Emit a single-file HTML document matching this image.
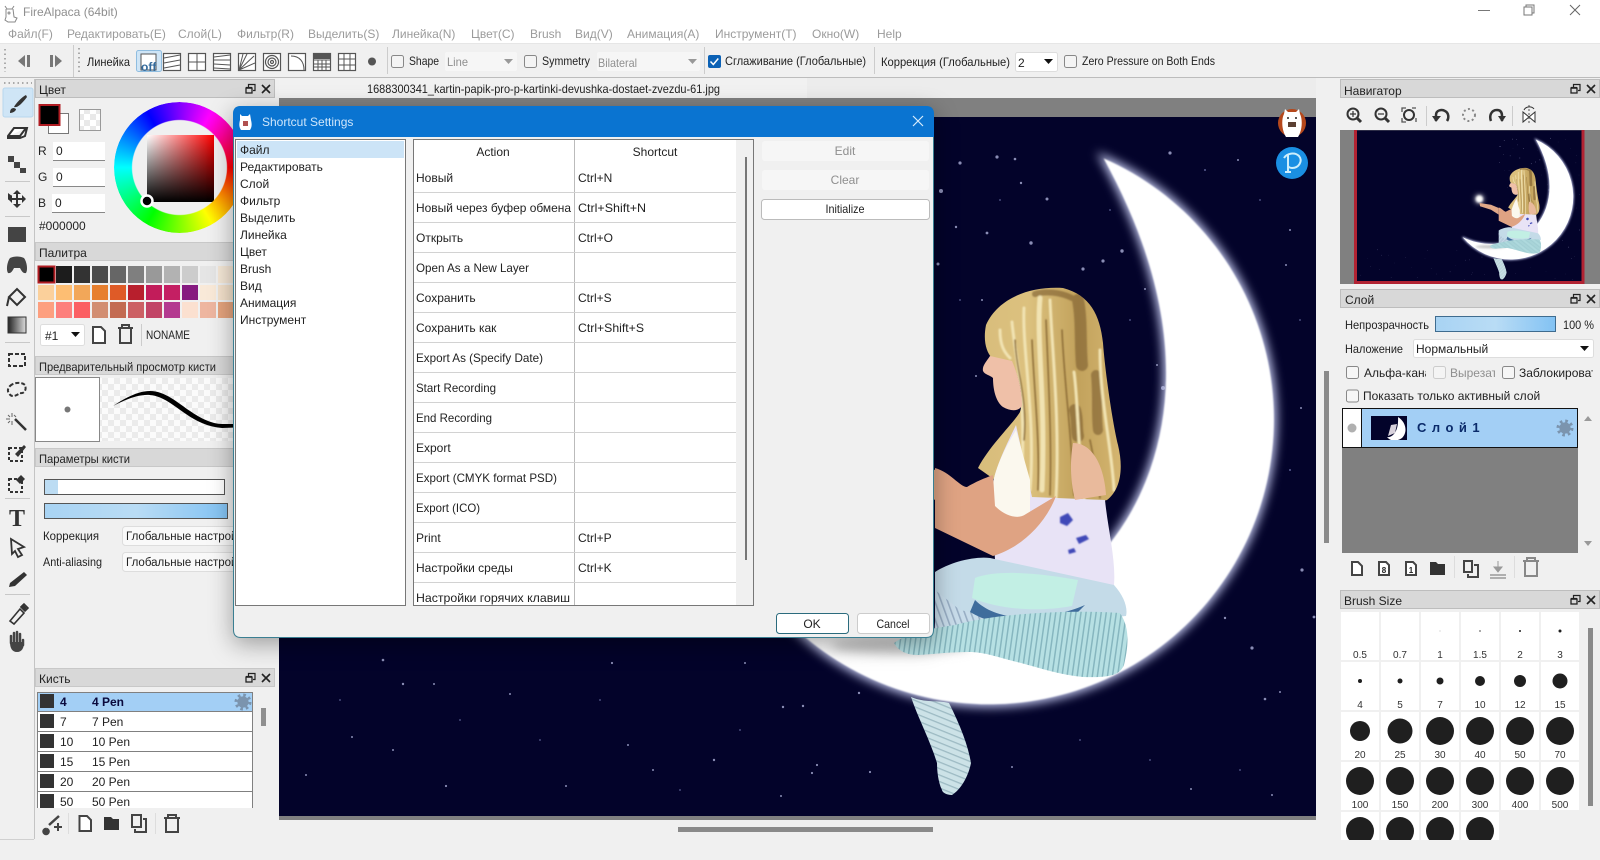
<!DOCTYPE html>
<html><head><meta charset="utf-8"><title>FireAlpaca</title>
<style>
html,body{margin:0;padding:0;width:1600px;height:860px;overflow:hidden;background:#f0f0f0}
svg{position:absolute;left:0;top:0}
text{font-family:"Liberation Sans","Noto Sans CJK SC",sans-serif;font-size:12px;fill:#222}
.m{fill:#9b9b9b}
.g{fill:#8f8f8f}
.c{text-anchor:middle}
.s{font-size:10px;fill:#333;text-anchor:middle}
#wheel{position:absolute;left:114px;top:102px;width:131px;height:131px;border-radius:50%;
background:conic-gradient(from 90deg,#f00,#ff0,#0f0,#0ff,#00f,#f0f,#f00);
-webkit-mask:radial-gradient(circle,transparent 47px,#000 48px);mask:radial-gradient(circle,transparent 47px,#000 48px)}
</style></head><body>
<svg width="1600" height="860" viewBox="0 0 1600 860">
<defs>
<filter id="b1" x="-20%" y="-20%" width="140%" height="140%"><feGaussianBlur stdDeviation="5"/></filter>
<filter id="b2" x="-5%" y="-5%" width="110%" height="110%"><feGaussianBlur stdDeviation=".7"/></filter>
<filter id="b3" x="-100%" y="-100%" width="300%" height="300%"><feGaussianBlur stdDeviation="5"/></filter>
<filter id="b4" x="-10%" y="-10%" width="120%" height="120%"><feGaussianBlur stdDeviation="1.500"/></filter>
<filter id="b5" x="-100%" y="-100%" width="300%" height="300%"><feGaussianBlur stdDeviation="12"/></filter>
<pattern id="ck" width="12" height="12" patternUnits="userSpaceOnUse"><rect width="12" height="12" fill="#fff"/><rect width="6" height="6" fill="#e9e9e9"/><rect x="6" y="6" width="6" height="6" fill="#e9e9e9"/></pattern>
<pattern id="st" width="5" height="8" patternUnits="userSpaceOnUse" patternTransform="rotate(8)"><rect width="5" height="8" fill="#b6e0e3"/><rect width="1.500" height="8" fill="#86b6bf"/></pattern>
<pattern id="st2" width="8" height="6" patternUnits="userSpaceOnUse" patternTransform="rotate(22)"><rect width="8" height="6" fill="#cce2e7"/><rect width="8" height="1.300" fill="#9dbac3"/></pattern>
<pattern id="st3" width="6" height="7" patternUnits="userSpaceOnUse" patternTransform="rotate(-20)"><rect width="6" height="7" fill="#c8dcea"/><rect width="1.600" height="7" fill="#98aec4"/></pattern>
<linearGradient id="hair" x1="0" y1="0" x2="1" y2="0"><stop offset="0" stop-color="#d8bd7c"/><stop offset=".35" stop-color="#dcc17e"/><stop offset=".7" stop-color="#c2a25c"/><stop offset="1" stop-color="#d4b570"/></linearGradient>
<linearGradient id="sl" x1="0" y1="0" x2="1" y2="0"><stop offset="0" stop-color="#a8d3f3"/><stop offset=".5" stop-color="#b9dcf5"/><stop offset="1" stop-color="#82c2f3"/></linearGradient>
<linearGradient id="sqh" x1="0" y1="0" x2="1" y2="0"><stop offset="0" stop-color="#fff"/><stop offset="1" stop-color="#f00"/></linearGradient>
<linearGradient id="sqv" x1="0" y1="0" x2="0" y2="1"><stop offset="0" stop-color="#000" stop-opacity="0"/><stop offset="1" stop-color="#000"/></linearGradient>
<linearGradient id="gr" x1="0" y1="0" x2="1" y2="0"><stop offset="0" stop-color="#222"/><stop offset="1" stop-color="#ddd"/></linearGradient>
<clipPath id="chair"><path d="M1063,288C1030,286 998,298 986,325C983,340 986,352 992,358L1012,362C1020,380 1024,400 1020,412C1012,425 990,445 978,468C995,480 1015,495 1032,497C1050,510 1090,505 1107,500C1120,490 1124,470 1118,445C1112,420 1105,370 1103,343C1100,315 1090,295 1063,288Z"/></clipPath>
<clipPath id="cnav"><rect x="1354" y="130" width="231" height="154"/></clipPath>
<clipPath id="cth"><rect x="1371" y="416" width="36" height="24"/></clipPath>
<clipPath id="cbl"><rect x="30" y="690" width="230" height="118"/></clipPath>
<clipPath id="cbs"><rect x="1340" y="610" width="260" height="230"/></clipPath>
<clipPath id="ca"><rect x="1360" y="360" width="66" height="24"/></clipPath>
<clipPath id="cb"><rect x="1448" y="360" width="47" height="24"/></clipPath>
<clipPath id="cc"><rect x="1517" y="360" width="76" height="24"/></clipPath>
<g id="hb"><rect x="-4" y="-1" width="6" height="5" fill="none" stroke="#222" stroke-width="1.300"/><path d="M-4,-1.200H2" stroke="#222" stroke-width="1.800"/><path d="M-1.500,-2V-4.500H5V1.500H3" fill="none" stroke="#222" stroke-width="1.200"/><path d="M12,-4L20,4M20,-4L12,4" stroke="#222" stroke-width="1.600"/></g>
<g id="gear"><circle r="7" fill="none" stroke="#7b94ae" stroke-width="3" stroke-dasharray="2.600 2.900"/><circle r="5.600" fill="#7b94ae"/></g>
<g id="scene">
<rect x="279" y="117" width="1037" height="699" fill="#03032a"/>
<g fill="#c4c8f0" opacity=".7">
<circle cx="960" cy="163" r="1.600"/><circle cx="997" cy="157" r="1.600"/><circle cx="1015" cy="159" r="1.300"/><circle cx="1021" cy="183" r="1.200"/><circle cx="941" cy="191" r="2"/><circle cx="1047" cy="199" r="1.500"/><circle cx="956" cy="227" r="1.200"/><circle cx="987" cy="233" r="1.400"/><circle cx="1031" cy="243" r="1.700"/><circle cx="1122" cy="251" r="1.700"/><circle cx="1103" cy="261" r="1.600"/><circle cx="1083" cy="269" r="1.600"/><circle cx="938" cy="264" r="1.500"/><circle cx="1170" cy="153" r="1.600"/><circle cx="1163" cy="388" r="2"/><circle cx="1145" cy="289" r="1"/><circle cx="976" cy="376" r="1"/><circle cx="982" cy="300" r="1"/><circle cx="1157" cy="365" r="1"/><circle cx="1302" cy="570" r="1.600"/><circle cx="1252" cy="648" r="1.600"/><circle cx="1225" cy="618" r="1.200"/><circle cx="1265" cy="699" r="1.300"/><circle cx="1280" cy="692" r="1"/><circle cx="1314" cy="617" r="1.400"/><circle cx="859" cy="693" r="1.200"/><circle cx="783" cy="707" r="1.200"/><circle cx="803" cy="706" r="1.200"/><circle cx="817" cy="765" r="1.100"/><circle cx="812" cy="773" r="1.100"/><circle cx="870" cy="772" r="1.100"/><circle cx="1012" cy="767" r="1"/><circle cx="1191" cy="789" r="1"/><circle cx="1272" cy="795" r="1"/><circle cx="383" cy="660" r="1.300"/><circle cx="403" cy="684" r="1.200"/><circle cx="434" cy="684" r="1"/><circle cx="714" cy="760" r="1.200"/><circle cx="653" cy="770" r="1"/><circle cx="628" cy="745" r="1"/><circle cx="446" cy="786" r="1.100"/><circle cx="393" cy="750" r="1"/><circle cx="510" cy="694" r="1"/><circle cx="352" cy="737" r="1"/><circle cx="612" cy="663" r="1.100"/><circle cx="745" cy="663" r="1"/><circle cx="566" cy="786" r="1"/><circle cx="781" cy="796" r="1"/><circle cx="306" cy="775" r="1"/><circle cx="1286" cy="265" r="1"/><circle cx="1301" cy="408" r="1"/><circle cx="1238" cy="160" r="1"/><circle cx="1290" cy="230" r="1"/>
</g>
<g fill="#5a5e90"><circle cx="1205" cy="170" r="1"/><circle cx="1260" cy="200" r=".9"/><circle cx="1300" cy="320" r=".9"/><circle cx="1290" cy="470" r="1"/><circle cx="1020" cy="300" r=".9"/><circle cx="1000" cy="200" r=".9"/><circle cx="1130" cy="320" r=".9"/><circle cx="1110" cy="210" r=".9"/><circle cx="960" cy="300" r=".9"/><circle cx="340" cy="700" r=".9"/><circle cx="460" cy="720" r=".9"/><circle cx="540" cy="740" r=".9"/><circle cx="600" cy="700" r=".9"/><circle cx="680" cy="790" r=".9"/><circle cx="740" cy="730" r=".9"/><circle cx="1080" cy="740" r=".9"/><circle cx="1150" cy="760" r=".9"/><circle cx="1240" cy="770" r=".9"/></g>
<path d="M1103.600,158.400A285,285 0 1 1 771,603C900,665 1090,640 1150,470C1185,370 1160,260 1103.600,158.400Z" fill="#bfc4ea" stroke="#bfc4ea" stroke-width="6" filter="url(#b1)"/>
<path d="M1103.600,158.400A285,285 0 1 1 771,603C900,665 1090,640 1150,470C1185,370 1160,260 1103.600,158.400Z" fill="#fff" filter="url(#b2)"/>
<ellipse cx="900" cy="646" rx="70" ry="8" fill="#c8c8c8" filter="url(#b3)"/>
<circle cx="847" cy="429" r="18" fill="#fff" filter="url(#b5)"/><circle cx="847" cy="429" r="16" fill="#fff" filter="url(#b3)"/>
<path d="M935,470L900,455L848,447L850,462L900,478L935,500Z" fill="#e0a888"/>
<path d="M1063,288C1030,286 998,298 986,325C983,340 986,352 992,358L1012,362C1020,380 1024,400 1020,412C1012,425 990,445 978,468C995,480 1015,495 1032,497C1050,510 1090,505 1107,500C1120,490 1124,470 1118,445C1112,420 1105,370 1103,343C1100,315 1090,295 1063,288Z" fill="url(#hair)"/>
<g clip-path="url(#chair)"><g fill="none" stroke-linecap="round" filter="url(#b2)">
<g stroke="#7a5c2c" opacity=".6"><path d="M1078,300C1082,320 1080,345 1082,365" stroke-width="12"/><path d="M1096,375C1098,395 1096,415 1098,430" stroke-width="10"/><path d="M1075,410C1078,420 1076,428 1078,436" stroke-width="12"/><path d="M1035,294C1045,291 1060,292 1072,298" stroke-width="6"/></g>
<g stroke="#f1e3b2"><path d="M1040,298C1036,340 1046,400 1042,490" stroke-width="5"/><path d="M1050,300C1052,350 1060,420 1056,498" stroke-width="3"/><path d="M1024,308C1022,350 1036,420 1030,490" stroke-width="3"/><path d="M1012,322C1014,350 1026,390 1022,470" stroke-width="3"/><path d="M1100,350C1100,400 1112,450 1114,490" stroke-width="3"/><path d="M1074,372C1078,400 1078,450 1084,500" stroke-width="3"/><path d="M1000,330C1000,345 1004,352 1010,358" stroke-width="3"/></g>
<g stroke="#8a6a34" stroke-width="1.500"><path d="M1062,330C1064,380 1072,440 1074,495"/><path d="M1032,340C1034,390 1040,440 1038,490"/><path d="M1090,440C1094,460 1098,480 1100,498"/><path d="M1015,340C1016,370 1028,400 1024,440"/><path d="M1046,320C1048,370 1052,440 1050,495"/></g>
</g></g>
<path d="M990,356C986,362 982,366 983,371C985,375 990,375 993,378C993,390 996,402 1003,407C1010,411 1018,412 1022,406C1022,390 1018,375 1012,361Z" fill="#efc0a8"/>
<path d="M1016,425C1004,450 994,470 992,490C990,530 995,550 995,560L1000,580L1114,585C1116,560 1108,530 1105,500L1032,497Z" fill="#e8e3f6"/>
<path d="M1016,430C1004,450 994,470 992,490L996,530L1030,515L1030,480Z" fill="#fbf8ee"/>
<path d="M1073,443C1092,443 1104,465 1106,495L1075,500C1070,480 1070,460 1073,443Z" fill="#e9ba9c"/>
<g fill="#4049b8" filter="url(#b2)"><path d="M1060,517l8,-4l5,7l-6,6l-7,-3zM1076,538l10,-3l3,4l-10,5zM1068,550l6,-2l2,4l-7,2z"/></g>
<path d="M935,468C950,472 960,487 967,487C975,482 985,478 993,475L995,506C1005,516 1018,520 1026,514L1056,496C1045,525 1020,548 993,556L935,528Z" fill="#dfa383"/>
<path d="M935,585L987,583L1010,625L935,632Z" fill="url(#st3)"/>
<path d="M935,572C950,562 975,556 990,558L1114,585C1124,596 1128,608 1126,616L1030,625L960,610L935,590Z" fill="#c4dbe8"/>
<path d="M975,578C1000,568 1050,575 1078,580L1072,606C1040,612 1000,610 972,598Z" fill="#c2efe4"/>
<path d="M975,600C1000,625 1050,620 1085,605L1078,612C1040,628 1000,630 970,612Z" fill="#3f6c9c"/>
<path d="M894,643C905,635 920,630 955,625C1000,612 1080,610 1120,613C1128,625 1130,640 1124,665C1120,675 1110,678 1083,677C1060,675 1040,668 1021,663C1000,658 985,652 969,652C950,652 935,654 918,655C905,655 898,650 894,643Z" fill="url(#st)"/>
<path d="M911,697C925,703 938,700 949,703C960,725 968,745 971,763C968,778 960,790 952,795C946,795 942,792 942,790C938,782 937,770 937,763C930,740 918,718 911,697Z" fill="url(#st2)"/>
</g>
</defs>

<rect width="1600" height="860" fill="#f0f0f0"/>
<rect width="1600" height="43" fill="#fff"/>
<!-- title -->
<g fill="none" stroke="#888" stroke-width="1"><path d="M5,6l2,3h5l2,-3M6,9v8l-1,3l3,2h7l2,-4l-3,-1l-1,-8"/><circle cx="9" cy="13" r="1"/></g>
<text x="23" y="16" class="g">FireAlpaca (64bit)</text>
<path d="M1478,10.500H1490" stroke="#777"/><rect x="1524" y="7" width="8" height="8" fill="none" stroke="#777"/><path d="M1526,7V5H1534V13H1532" fill="none" stroke="#777"/><path d="M1570,5L1580,15M1580,5L1570,15" stroke="#666"/>
<text x="8" y="38" class="m">Файл(F)</text><text x="67" y="38" class="m">Редактировать(E)</text><text x="178" y="38" class="m">Слой(L)</text><text x="237" y="38" class="m">Фильтр(R)</text><text x="308" y="38" class="m">Выделить(S)</text><text x="392" y="38" class="m">Линейка(N)</text><text x="471" y="38" class="m">Цвет(C)</text><text x="530" y="38" class="m">Brush</text><text x="575" y="38" class="m">Вид(V)</text><text x="627" y="38" class="m">Анимация(A)</text><text x="715" y="38" class="m">Инструмент(T)</text><text x="812" y="38" class="m">Окно(W)</text><text x="877" y="38" class="m">Help</text>

<!-- toolbar -->
<rect y="43" width="1600" height="34" fill="#f0f0f0"/><path d="M0,77.500H1600" stroke="#bcbcbc"/><path d="M0,43.500H1600" stroke="#e6e6e6"/>
<path d="M5,49V72M79,48V73" stroke="#aaa" stroke-width="2" stroke-dasharray="1.500 3"/>
<path d="M18,61l7,-6v12zM27,55h3v12h-3zM50,55h3v12h-3zM55,55l7,6l-7,6z" fill="#777"/>
<path d="M73.500,45V77M387.500,47V74M704.500,47V74M874.500,47V74" stroke="#ccc"/>
<text x="87" y="66" textLength="43" lengthAdjust="spacingAndGlyphs">Линейка</text>
<rect x="136.500" y="50.500" width="25" height="21" rx="2" fill="#cfe5f6" stroke="#8fbde0"/>
<rect x="141" y="54" width="15" height="16" fill="#fff" stroke="#555"/>
<text x="141" y="71" style="font-size:12px;font-weight:bold;fill:#336a9c">off</text>
<g fill="#fff" stroke="#555" stroke-width="1.200">
<rect x="163.500" y="53.500" width="17" height="17"/><rect x="188.500" y="53.500" width="17" height="17"/><rect x="213.500" y="53.500" width="17" height="17"/><rect x="238.500" y="53.500" width="17" height="17"/><rect x="263.500" y="53.500" width="17" height="17"/><circle cx="272" cy="62" r="6.500"/><circle cx="272" cy="62" r="4"/><circle cx="272" cy="62" r="1.500"/><rect x="288.500" y="53.500" width="17" height="17"/><rect x="313.500" y="53.500" width="17" height="17"/><rect x="338.500" y="53.500" width="17" height="17"/>
</g>
<g fill="none" stroke="#555">
<path d="M164,58L180,55M164,63L180,60M164,68L180,65M197,54V70M189,62H205M214,57L230,55M214,60L230,60M214,64L230,65M214,68L230,69M239,70L247,54M239,70L254,56M239,70L255,63M239,70L243,54M291,56C300,56 304,62 304,70M314,60H330M314,64H330M314,67H330M318,60V70M322,60V70M326,60V70M344,54V70M350,54V70M339,59H355M339,65H355"/>
</g>
<rect x="314" y="54" width="16" height="5" fill="#555"/>
<circle cx="372" cy="61.500" r="4" fill="#555"/>
<rect x="391.500" y="55.500" width="12" height="12" rx="2" fill="#f4f4f4" stroke="#888"/>
<text x="409" y="65" textLength="30" lengthAdjust="spacingAndGlyphs">Shape</text>
<rect x="445" y="52" width="72" height="19" rx="2" fill="#f6f6f6"/><text x="447" y="66" class="g" textLength="21" lengthAdjust="spacingAndGlyphs">Line</text><path d="M504,59h9l-4.500,5z" fill="#999"/>
<rect x="524.500" y="55.500" width="12" height="12" rx="2" fill="#f4f4f4" stroke="#888"/>
<text x="542" y="65" textLength="48" lengthAdjust="spacingAndGlyphs">Symmetry</text>
<rect x="597" y="52" width="103" height="19" rx="2" fill="#f6f6f6"/><text x="598" y="67" class="g" textLength="39" lengthAdjust="spacingAndGlyphs">Bilateral</text><path d="M688,59h9l-4.500,5z" fill="#999"/>
<rect x="708" y="55" width="13" height="13" rx="2" fill="#0b61b5"/><path d="M710.500,61.500l2.800,3l5,-6" fill="none" stroke="#fff" stroke-width="1.500"/>
<text x="725" y="65" textLength="141" lengthAdjust="spacingAndGlyphs">Сглаживание (Глобальные)</text>
<text x="881" y="66" textLength="129" lengthAdjust="spacingAndGlyphs">Коррекция (Глобальные)</text>
<rect x="1015.500" y="52.500" width="42" height="19" rx="2" fill="#fff" stroke="#ddd"/><text x="1018" y="67">2</text><path d="M1044,59h9l-4.500,5z" fill="#111"/>
<rect x="1064.500" y="55.500" width="12" height="12" rx="2" fill="#f4f4f4" stroke="#888"/>
<text x="1082" y="65" textLength="133" lengthAdjust="spacingAndGlyphs">Zero Pressure on Both Ends</text>

<!-- left toolbar -->
<path d="M34.500,79V839" stroke="#c4c4c4"/><path d="M0,839.500H34" stroke="#d0d0d0"/>
<path d="M4,83H32" stroke="#aaa" stroke-width="2" stroke-dasharray="1.500 3"/>
<rect x="3" y="88" width="30" height="29" rx="2" fill="#cfe5f6" stroke="#b7d6ee"/>
<path d="M26,95C22,97 16,103 14,107C17,108 21,105 27,97zM14,108C11,108 10,110 10,113C13,113 16,111 16,109z" fill="#333"/>
<path d="M8,136L14,128H27L25,136L20,138H8zM9,136H20L26,128" fill="#fff" stroke="#333" stroke-width="2"/>
<path d="M8,156h6v6h-6zM14,162h6v6h-6zM20,168h6v5h-6z" fill="#444"/>
<path d="M5,181.500H30M5,216.500H30M5,342.500H30M5,498.500H30M5,594.500H30" stroke="#c8c8c8"/>
<path d="M17,190l4,4h-3v4h4v-3l4,4l-4,4v-3h-4v4h3l-4,4l-4,-4h3v-4h-4v3l-4,-4l4,-4v3h4v-4h-3z" fill="#333"/><path d="M8,193l4,3l-4,4z" fill="#333"/>
<rect x="8" y="227" width="18" height="15" fill="#444"/>
<path d="M10,258C14,256 20,256 24,258C27,262 28,270 26,273C23,274 21,270 20,268H14C13,270 11,274 8,273C6,270 7,262 10,258Z" fill="#444"/>
<path d="M9,297L17,289L25,297L17,305ZM9,297L7,306" fill="none" stroke="#333" stroke-width="2"/>
<rect x="8" y="317" width="18" height="16" fill="url(#gr)" stroke="#333"/>
<rect x="9" y="354" width="16" height="12" fill="none" stroke="#333" stroke-width="2" stroke-dasharray="4 2"/>
<path d="M10,386C14,382 22,382 25,385C27,390 24,394 20,393C16,396 11,398 9,393C7,391 8,388 10,386Z" fill="none" stroke="#333" stroke-width="2" stroke-dasharray="4 2"/>
<path d="M15,419L26,430" stroke="#333" stroke-width="2.500"/><path d="M12,413v4M12,421v4M6,419h4M14,415l2,2M8,415l2,2M8,423l2,-2" stroke="#666"/>
<rect x="9" y="448" width="13" height="13" fill="none" stroke="#333" stroke-width="2" stroke-dasharray="3 2"/><path d="M15,454L24,445L26,447L18,457z" fill="#333"/>
<rect x="9" y="479" width="13" height="13" fill="none" stroke="#333" stroke-width="2" stroke-dasharray="3 2"/><path d="M16,480L21,475L25,479L20,484z" fill="#333"/>
<text x="17" y="526" class="c" style="font-family:'Liberation Serif',serif;font-size:24px;font-weight:bold;fill:#333">T</text>
<path d="M11,539L24,547L18,549L22,555L18,557L15,551L12,554Z" fill="none" stroke="#333" stroke-width="1.800"/>
<path d="M10,583L24,572L27,575L15,586L9,587Z" fill="#333"/>
<path d="M10,621L20,609L24,613L14,624ZM21,607L24,604L28,608L25,611Z" fill="none" stroke="#333" stroke-width="1.600"/><path d="M20,607l4,4l3,-3l-4,-4z" fill="#333"/>
<path d="M11,643V636M14,642V633M17,642V632M20,642V634M23,645V640" stroke="#444" stroke-width="2.500" stroke-linecap="round"/><path d="M10,642H24C24,648 22,652 17,652C12,652 10,648 10,642Z" fill="#444"/>

<!-- Color panel -->
<rect x="35.500" y="79.500" width="239" height="18" fill="#d8d8d8" stroke="#bdbdbd"/><text x="39" y="94">Цвет</text><use href="#hb" x="250" y="89"/>
<rect x="48.500" y="113.500" width="20" height="20" fill="#fff" stroke="#777"/>
<rect x="39.500" y="105" width="20" height="20" fill="#000" stroke="#b01c22" stroke-width="2"/>
<rect x="79.500" y="109.500" width="21" height="21" fill="url(#ck)" stroke="#999"/>
<text x="38" y="155">R</text><text x="38" y="181">G</text><text x="38" y="207">B</text>
<rect x="53" y="142" width="52" height="18" fill="#fff"/><path d="M53,160.500H105" stroke="#888"/><text x="56" y="155">0</text>
<rect x="53" y="168" width="52" height="18" fill="#fff"/><path d="M53,186.500H105" stroke="#888"/><text x="56" y="181">0</text>
<rect x="52" y="194" width="53" height="18" fill="#fff"/><path d="M52,212.500H105" stroke="#888"/><text x="55" y="207">0</text>
<text x="39" y="230">#000000</text>
<rect x="147" y="135" width="67" height="67" fill="url(#sqh)"/><rect x="147" y="135" width="67" height="67" fill="url(#sqv)"/>

<!-- palette -->
<rect x="35.500" y="242.500" width="239" height="18" fill="#d8d8d8" stroke="#c8c8c8"/><text x="39" y="257">Палитра</text>
<rect x="38.500" y="266.500" width="16" height="16" fill="#000" stroke="#b01c22" stroke-width="2"/>
<g>
<rect x="56" y="266" width="16" height="17" fill="#1c1c1c"/><rect x="74" y="266" width="16" height="17" fill="#333"/><rect x="92" y="266" width="16" height="17" fill="#4b4b4b"/><rect x="110" y="266" width="16" height="17" fill="#666"/><rect x="128" y="266" width="16" height="17" fill="#7f7f7f"/><rect x="146" y="266" width="16" height="17" fill="#999"/><rect x="164" y="266" width="16" height="17" fill="#b2b2b2"/><rect x="182" y="266" width="16" height="17" fill="#ccc"/><rect x="200" y="266" width="16" height="17" fill="#e5e5e5"/><rect x="218" y="266" width="16" height="17" fill="#f5e7d6"/>
<rect x="38" y="285" width="16" height="15" fill="#fbd09b"/><rect x="56" y="285" width="16" height="15" fill="#fdbe73"/><rect x="74" y="285" width="16" height="15" fill="#f2a759"/><rect x="92" y="285" width="16" height="15" fill="#e77f2f"/><rect x="110" y="285" width="16" height="15" fill="#df5b27"/><rect x="128" y="285" width="16" height="15" fill="#b81f2d"/><rect x="146" y="285" width="16" height="15" fill="#c21c5a"/><rect x="164" y="285" width="16" height="15" fill="#c41f63"/><rect x="182" y="285" width="16" height="15" fill="#861a80"/><rect x="200" y="285" width="16" height="15" fill="#f9e9d8"/><rect x="218" y="285" width="16" height="15" fill="#f4e2cc"/>
<rect x="38" y="302" width="16" height="16" fill="#fd9f7f"/><rect x="56" y="302" width="16" height="16" fill="#fd7f7c"/><rect x="74" y="302" width="16" height="16" fill="#fb5f63"/><rect x="92" y="302" width="16" height="16" fill="#d28e72"/><rect x="110" y="302" width="16" height="16" fill="#c36b52"/><rect x="128" y="302" width="16" height="16" fill="#cc6064"/><rect x="146" y="302" width="16" height="16" fill="#c24466"/><rect x="164" y="302" width="16" height="16" fill="#b43a90"/><rect x="182" y="302" width="16" height="16" fill="#fbe0d0"/><rect x="200" y="302" width="16" height="16" fill="#eeb6a0"/><rect x="218" y="302" width="16" height="16" fill="#e6a47e"/>
</g>
<rect x="40.500" y="324.500" width="44" height="21" rx="2" fill="#fff" stroke="#ddd"/><text x="45" y="340">#1</text><path d="M71,332h9l-4.500,5z" fill="#111"/>
<path d="M93,327H101L105,331V343H93Z" fill="#fff" stroke="#444" stroke-width="2"/>
<path d="M118,328H133M122,328V325H129V328M120,328V343H131V328" fill="none" stroke="#444" stroke-width="2"/>
<path d="M141.500,324V346" stroke="#ccc"/>
<text x="146" y="339" textLength="44" lengthAdjust="spacingAndGlyphs">NONAME</text>

<!-- preview -->
<rect x="35.500" y="356.500" width="239" height="18" fill="#d8d8d8" stroke="#c8c8c8"/><text x="39" y="371" textLength="177" lengthAdjust="spacingAndGlyphs">Предварительный просмотр кисти</text>
<rect x="100" y="378" width="140" height="63" fill="url(#ck)" opacity=".7"/>
<rect x="35.500" y="377.500" width="64" height="64" fill="#fff" stroke="#888"/><circle cx="67.500" cy="409.500" r="3" fill="#777"/>
<path d="M113,406C125,398 138,391 150,391C165,391 178,403 190,411C200,418 212,424 222,424L236,424L236,427.500L222,428C208,427 196,421 186,414C174,406 163,396 150,395C138,394 125,400 113,406Z" fill="#000"/>

<!-- params -->
<rect x="35.500" y="448.500" width="239" height="18" fill="#d8d8d8" stroke="#c8c8c8"/><text x="39" y="463" textLength="91" lengthAdjust="spacingAndGlyphs">Параметры кисти</text>
<rect x="44.500" y="479.500" width="180" height="15" fill="#fff" stroke="#555"/><rect x="45" y="480" width="13" height="14" fill="#bcdcf3"/>
<rect x="44.500" y="503.500" width="183" height="15" fill="url(#sl)" stroke="#555"/>
<text x="43" y="540" textLength="56" lengthAdjust="spacingAndGlyphs">Коррекция</text><text x="43" y="566" textLength="59" lengthAdjust="spacingAndGlyphs">Anti-aliasing</text>
<rect x="122.500" y="526.500" width="130" height="19" rx="3" fill="#f9f9f9" stroke="#ddd"/><text x="126" y="540" style="font-size:11.500px">Глобальные настройки</text>
<rect x="122.500" y="552.500" width="130" height="19" rx="3" fill="#f9f9f9" stroke="#ddd"/><text x="126" y="566" style="font-size:11.500px">Глобальные настройки</text>

<!-- brush panel -->
<rect x="35.500" y="668.500" width="239" height="18" fill="#d8d8d8" stroke="#c8c8c8"/><text x="39" y="683">Кисть</text><use href="#hb" x="250" y="678"/>
<g clip-path="url(#cbl)">
<rect x="37.500" y="692.500" width="215" height="131" fill="#fff" stroke="#808080"/>
<rect x="38" y="693" width="214" height="18" fill="#a3cff5"/>
<path d="M38,711.500H252M38,731.500H252M38,751.500H252M38,771.500H252M38,791.500H252" stroke="#808080"/>
<g fill="#333"><rect x="40" y="694" width="14" height="14"/><rect x="40" y="714" width="14" height="14"/><rect x="40" y="734" width="14" height="14"/><rect x="40" y="754" width="14" height="14"/><rect x="40" y="774" width="14" height="14"/><rect x="40" y="794" width="14" height="14"/></g>
<text x="60" y="706" style="font-weight:bold;fill:#0a0a3c">4</text><text x="92" y="706" style="font-weight:bold;fill:#0a0a3c">4  Pen</text>
<text x="60" y="726">7</text><text x="92" y="726">7  Pen</text>
<text x="60" y="746">10</text><text x="92" y="746">10  Pen</text>
<text x="60" y="766">15</text><text x="92" y="766">15  Pen</text>
<text x="60" y="786">20</text><text x="92" y="786">20  Pen</text>
<text x="60" y="806">50</text><text x="92" y="806">50  Pen</text>
</g>
<use href="#gear" x="243" y="702"/>
<rect x="261" y="708" width="5" height="18" fill="#8f8f8f"/>
<path d="M49,825L59,816M46,829a2.500,2.500 0 1 0 .1,0" fill="#444" stroke="#444" stroke-width="2.500"/><path d="M58,823V831M54,827H62" stroke="#444" stroke-width="2"/>
<path d="M68.500,813V834M155.500,813V834" stroke="#ddd"/>
<path d="M79.500,816H87L91,820V831H79.500Z" fill="#fff" stroke="#444" stroke-width="2"/>
<path d="M104,817H111L113,819H119V830H104Z" fill="#333"/>
<path d="M132,815H141V827H132ZM143,819H146V832H135V829" fill="none" stroke="#444" stroke-width="2"/>
<path d="M164,818H180M168,818V815H176V818M166,818V832H178V818" fill="none" stroke="#444" stroke-width="2"/>

<!-- tabs and canvas -->
<rect x="279" y="78" width="1037" height="20" fill="#ececec"/>
<rect x="279" y="78" width="528" height="20" fill="#f1f1f1"/>
<text x="367" y="93" textLength="353" lengthAdjust="spacingAndGlyphs">1688300341_kartin-papik-pro-p-kartinki-devushka-dostaet-zvezdu-61.jpg</text>
<rect x="279" y="98" width="1037" height="722" fill="#808080"/>
<use href="#scene"/>
<rect x="1324" y="371" width="5" height="172" fill="#8a8a8a"/>
<rect x="678" y="827" width="255" height="5" fill="#8a8a8a"/>
<!-- alpaca & pixiv -->
<circle cx="1292" cy="123" r="14" fill="#b5481c"/>
<path d="M1284,114L1285,109L1288,112H1296L1299,109L1300,114C1303,120 1302,131 1298,137H1286C1282,131 1281,120 1284,114Z" fill="#fff"/>
<rect x="1288" y="122" width="8" height="5" fill="#5c4033"/>
<circle cx="1288" cy="118" r="1" fill="#222"/><circle cx="1296" cy="118" r="1" fill="#222"/>
<circle cx="1292" cy="163" r="16" fill="#1a8fe3"/>
<path d="M1284,158C1287,153 1295,152 1299,156C1303,161 1299,168 1292,168C1289,168 1288,166 1288,166M1288,155V172M1285,172H1291" fill="none" stroke="#cdeefc" stroke-width="2"/>

<!-- navigator -->
<rect x="1340.500" y="79.500" width="259" height="18" fill="#d8d8d8" stroke="#bdbdbd"/><text x="1344" y="95">Навигатор</text><use href="#hb" x="1575" y="89"/>
<g fill="none" stroke="#333" stroke-width="2">
<circle cx="1353" cy="114" r="5.500"/><path d="M1357,118L1361,122" stroke-width="3"/><path d="M1350,114h6M1353,111v6" stroke-width="1.200"/>
<circle cx="1381" cy="114" r="5.500"/><path d="M1385,118L1389,122" stroke-width="3"/><path d="M1378,114h6" stroke-width="1.200"/>
<circle cx="1409" cy="115" r="5"/><path d="M1402,112V108H1406M1416,108H1412M1416,122V118M1402,118V122H1406" stroke-width="1.300" stroke="#555"/>
<path d="M1436,121V115C1436,110 1442,109 1445,111C1449,113 1449,118 1447,121" stroke-width="2.500"/>
<path d="M1491,121C1489,116 1491,110 1497,110C1501,110 1502,113 1502,116V121" stroke-width="2.500"/>
</g>
<path d="M1432,116H1441L1436,122ZM1498,116H1506L1502,122Z" fill="#333"/>
<circle cx="1469" cy="115" r="6" fill="none" stroke="#888" stroke-width="2" stroke-dasharray="2 2.500"/>
<path d="M1426.500,106V126M1512.500,106V126" stroke="#ccc"/>
<path d="M1523,112L1529,117L1523,122ZM1535,112L1529,117L1535,122Z" fill="#fff" stroke="#333"/><path d="M1529,105V125" stroke="#555" stroke-dasharray="2 2"/><path d="M1524,110C1526,106 1532,106 1534,109" fill="none" stroke="#333"/>
<rect x="1340" y="130" width="260" height="154" fill="#808080"/>
<g clip-path="url(#cnav)"><use href="#scene" transform="translate(1293,104.600) scale(.22)"/></g>
<path d="M1355.500,130V282.500H1583V130" fill="none" stroke="#b22333" stroke-width="3"/>

<!-- layer -->
<rect x="1340.500" y="289.500" width="259" height="18" fill="#d8d8d8" stroke="#bdbdbd"/><text x="1345" y="304">Слой</text><use href="#hb" x="1575" y="299"/>
<text x="1345" y="329" textLength="84" lengthAdjust="spacingAndGlyphs">Непрозрачность</text>
<rect x="1435.500" y="316.500" width="120" height="15" fill="url(#sl)" stroke="#3f6c8f"/>
<text x="1563" y="329" textLength="31" lengthAdjust="spacingAndGlyphs">100 %</text>
<text x="1345" y="353" textLength="58" lengthAdjust="spacingAndGlyphs">Наложение</text>
<rect x="1413.500" y="339.500" width="180" height="18" rx="2" fill="#fff" stroke="#ddd"/><text x="1416" y="353">Нормальный</text><path d="M1580,346h9l-4.500,5z" fill="#111"/>
<rect x="1346.500" y="366.500" width="12" height="12" rx="2" fill="#f6f6f6" stroke="#888"/><text x="1364" y="377" clip-path="url(#ca)">Альфа-канал</text>
<rect x="1433.500" y="366.500" width="12" height="12" rx="2" fill="#f4f4f4" stroke="#ccc"/><text x="1450" y="377" class="g" clip-path="url(#cb)">Вырезать</text>
<rect x="1502.500" y="366.500" width="12" height="12" rx="2" fill="#f6f6f6" stroke="#888"/><text x="1519" y="377" clip-path="url(#cc)">Заблокировать</text>
<rect x="1346.500" y="390" width="12" height="12" rx="2" fill="#f6f6f6" stroke="#888"/><text x="1363" y="400">Показать только активный слой</text>
<rect x="1342" y="408" width="236" height="145" fill="#808080"/>
<rect x="1342.500" y="408.500" width="19" height="39" fill="#fff" stroke="#111"/>
<rect x="1361.500" y="408.500" width="216" height="39" fill="#a3cff5" stroke="#111"/>
<circle cx="1352" cy="428" r="4.500" fill="#b0b0b0"/>
<rect x="1371" y="416" width="36" height="24" fill="#03032a"/>
<g clip-path="url(#cth)"><path d="M1398,417C1406,422 1408,432 1402,438C1396,442 1390,441 1387,437C1392,438 1399,432 1398,417Z" fill="#fff"/><path d="M1391,425L1397,424L1395,433L1388,436Z" fill="#d8d2dc"/></g>
<text x="1417" y="432" style="font-weight:bold;font-size:13px;fill:#0a2a6a;letter-spacing:5.500px">Слой1</text>
<use href="#gear" x="1565" y="428"/>
<path d="M1584,421h8l-4,-5zM1584,541h8l-4,5z" fill="#999"/>
<path d="M1352,562H1358L1362,566V575H1352Z" fill="#fff" stroke="#444" stroke-width="2"/>
<path d="M1379,562H1386L1389,565V575H1379Z" fill="#fff" stroke="#444" stroke-width="2"/><text x="1384" y="573" class="c" style="font-size:8px;font-weight:bold">8</text>
<path d="M1406,562H1413L1416,565V575H1406Z" fill="#fff" stroke="#444" stroke-width="2"/><text x="1411" y="573" class="c" style="font-size:8px;font-weight:bold">1</text>
<path d="M1430,562H1436L1438,564H1445V575H1430Z" fill="#333"/>
<path d="M1454.500,556V578M1514.500,556V578" stroke="#ddd"/>
<path d="M1464,561H1472V572H1464ZM1474,565H1478V577H1468V574" fill="none" stroke="#444" stroke-width="2"/>
<path d="M1498,561V567M1494,567H1502L1498,572Z" fill="#999" stroke="#999"/><path d="M1490,575H1506M1490,578H1506" stroke="#999" stroke-width="1.500"/>
<path d="M1523,561H1539M1527,561V558H1535V561M1525,561V576H1537V561" fill="none" stroke="#888" stroke-width="2"/>

<!-- brush size -->
<rect x="1340.500" y="590.500" width="259" height="18" fill="#d8d8d8" stroke="#bdbdbd"/><text x="1344" y="605">Brush Size</text><use href="#hb" x="1575" y="600"/>
<g clip-path="url(#cbs)">
<g fill="#fff">
<rect x="1341" y="612" width="38" height="48"/><rect x="1381" y="612" width="38" height="48"/><rect x="1421" y="612" width="38" height="48"/><rect x="1461" y="612" width="38" height="48"/><rect x="1501" y="612" width="38" height="48"/><rect x="1541" y="612" width="38" height="48"/>
<rect x="1341" y="662" width="38" height="48"/><rect x="1381" y="662" width="38" height="48"/><rect x="1421" y="662" width="38" height="48"/><rect x="1461" y="662" width="38" height="48"/><rect x="1501" y="662" width="38" height="48"/><rect x="1541" y="662" width="38" height="48"/>
<rect x="1341" y="712" width="38" height="48"/><rect x="1381" y="712" width="38" height="48"/><rect x="1421" y="712" width="38" height="48"/><rect x="1461" y="712" width="38" height="48"/><rect x="1501" y="712" width="38" height="48"/><rect x="1541" y="712" width="38" height="48"/>
<rect x="1341" y="762" width="38" height="48"/><rect x="1381" y="762" width="38" height="48"/><rect x="1421" y="762" width="38" height="48"/><rect x="1461" y="762" width="38" height="48"/><rect x="1501" y="762" width="38" height="48"/><rect x="1541" y="762" width="38" height="48"/>
<rect x="1341" y="812" width="38" height="28"/><rect x="1381" y="812" width="38" height="28"/><rect x="1421" y="812" width="38" height="28"/><rect x="1461" y="812" width="38" height="28"/>
</g>
<g fill="#1f1f1f">
<circle cx="1440" cy="631" r=".5" opacity=".4"/><circle cx="1480" cy="631" r="1" opacity=".5"/><circle cx="1520" cy="631" r="1"/><circle cx="1560" cy="631" r="1.500"/>
<circle cx="1360" cy="681" r="2"/><circle cx="1400" cy="681" r="2.500"/><circle cx="1440" cy="681" r="3.500"/><circle cx="1480" cy="681" r="5"/><circle cx="1520" cy="681" r="6"/><circle cx="1560" cy="681" r="7.500"/>
<circle cx="1360" cy="731" r="10"/><circle cx="1400" cy="731" r="12.500"/><circle cx="1440" cy="731" r="14"/><circle cx="1480" cy="731" r="14"/><circle cx="1520" cy="731" r="14"/><circle cx="1560" cy="731" r="14"/>
<circle cx="1360" cy="781" r="14"/><circle cx="1400" cy="781" r="14"/><circle cx="1440" cy="781" r="14"/><circle cx="1480" cy="781" r="14"/><circle cx="1520" cy="781" r="14"/><circle cx="1560" cy="781" r="14"/>
<circle cx="1360" cy="831" r="14"/><circle cx="1400" cy="831" r="14"/><circle cx="1440" cy="831" r="14"/><circle cx="1480" cy="831" r="14"/>
</g>
<text x="1360" y="658" class="s">0.5</text><text x="1400" y="658" class="s">0.7</text><text x="1440" y="658" class="s">1</text><text x="1480" y="658" class="s">1.5</text><text x="1520" y="658" class="s">2</text><text x="1560" y="658" class="s">3</text>
<text x="1360" y="708" class="s">4</text><text x="1400" y="708" class="s">5</text><text x="1440" y="708" class="s">7</text><text x="1480" y="708" class="s">10</text><text x="1520" y="708" class="s">12</text><text x="1560" y="708" class="s">15</text>
<text x="1360" y="758" class="s">20</text><text x="1400" y="758" class="s">25</text><text x="1440" y="758" class="s">30</text><text x="1480" y="758" class="s">40</text><text x="1520" y="758" class="s">50</text><text x="1560" y="758" class="s">70</text>
<text x="1360" y="808" class="s">100</text><text x="1400" y="808" class="s">150</text><text x="1440" y="808" class="s">200</text><text x="1480" y="808" class="s">300</text><text x="1520" y="808" class="s">400</text><text x="1560" y="808" class="s">500</text>
</g>
<rect x="1588" y="628" width="5" height="178" fill="#8a8a8a"/>
</svg>

<div id="wheel"></div>
<svg width="1600" height="860" viewBox="0 0 1600 860"><circle cx="147" cy="201" r="5.500" fill="#000" stroke="#fff" stroke-width="2.500"/></svg>

<svg width="1600" height="860" viewBox="0 0 1600 860" style="filter:drop-shadow(0 6px 12px rgba(0,0,0,.35))">
<path d="M241,106.500H926Q933.500,106.500 933.500,114V630Q933.500,637.500 926,637.500H241Q233.500,637.500 233.500,630V114Q233.500,106.500 241,106.500Z" fill="#f0f0f0" stroke="#3a7f92"/>
<path d="M241,106H926Q934,106 934,114V137H233V114Q233,106 241,106Z" fill="#0a74d1"/>
<path d="M240,114L242,116H248L250,114L251,120C252,124 252,127 250,130H241C239,127 239,124 240,120Z" fill="#fff"/><rect x="243" y="121" width="5" height="5" fill="#b05050"/>
<text x="262" y="126" style="fill:#cfe6fb">Shortcut Settings</text>
<path d="M913,116L923,126M923,116L913,126" stroke="#d8ecfb" stroke-width="1.200"/>
<!-- category list -->
<rect x="235.500" y="139.500" width="170" height="466" fill="#fff" stroke="#777"/>
<rect x="237" y="141" width="167" height="17" fill="#cce4f7"/>
<text x="240" y="154">Файл</text><text x="240" y="171">Редактировать</text><text x="240" y="188">Слой</text><text x="240" y="205">Фильтр</text><text x="240" y="222">Выделить</text><text x="240" y="239">Линейка</text><text x="240" y="256">Цвет</text><text x="240" y="273">Brush</text><text x="240" y="290">Вид</text><text x="240" y="307">Анимация</text><text x="240" y="324">Инструмент</text>
<!-- table -->
<rect x="413.500" y="139.500" width="340" height="466" fill="#fff" stroke="#777"/>
<rect x="736" y="140" width="17" height="465" fill="#f0f0f0"/>
<path d="M574.500,140V605" stroke="#bbb"/>
<rect x="745" y="157" width="2" height="403" fill="#777"/>
<g stroke="#d2d2d2"><path d="M414,192.500H736M414,222.500H736M414,252.500H736M414,282.500H736M414,312.500H736M414,342.500H736M414,372.500H736M414,402.500H736M414,432.500H736M414,462.500H736M414,492.500H736M414,522.500H736M414,552.500H736M414,582.500H736"/></g>
<text x="493" y="156" class="c">Action</text><text x="655" y="156" class="c">Shortcut</text>
<text x="416" y="182">Новый</text><text x="578" y="182">Ctrl+N</text>
<text x="416" y="212" textLength="155" lengthAdjust="spacingAndGlyphs">Новый через буфер обмена</text><text x="578" y="212" textLength="68" lengthAdjust="spacingAndGlyphs">Ctrl+Shift+N</text>
<text x="416" y="242">Открыть</text><text x="578" y="242">Ctrl+O</text>
<text x="416" y="272" textLength="113" lengthAdjust="spacingAndGlyphs">Open As a New Layer</text>
<text x="416" y="302">Сохранить</text><text x="578" y="302">Ctrl+S</text>
<text x="416" y="332">Сохранить как</text><text x="578" y="332" textLength="66" lengthAdjust="spacingAndGlyphs">Ctrl+Shift+S</text>
<text x="416" y="362" textLength="127" lengthAdjust="spacingAndGlyphs">Export As (Specify Date)</text>
<text x="416" y="392" textLength="80" lengthAdjust="spacingAndGlyphs">Start Recording</text>
<text x="416" y="422" textLength="76" lengthAdjust="spacingAndGlyphs">End Recording</text>
<text x="416" y="452">Export</text>
<text x="416" y="482" textLength="141" lengthAdjust="spacingAndGlyphs">Export (CMYK format PSD)</text>
<text x="416" y="512" textLength="64" lengthAdjust="spacingAndGlyphs">Export (ICO)</text>
<text x="416" y="542">Print</text><text x="578" y="542">Ctrl+P</text>
<text x="416" y="572">Настройки среды</text><text x="578" y="572">Ctrl+K</text>
<text x="416" y="602" textLength="154" lengthAdjust="spacingAndGlyphs">Настройки горячих клавиш</text>
<!-- buttons -->
<rect x="762" y="141" width="167" height="20" rx="3" fill="#f6f6f6"/><text x="845" y="155" class="c g">Edit</text>
<rect x="762" y="170" width="167" height="20" rx="3" fill="#f6f6f6"/><text x="845" y="184" class="c g">Clear</text>
<rect x="761.500" y="199.500" width="168" height="20" rx="3" fill="#fff" stroke="#bbb"/><text x="845" y="213" class="c" textLength="39" lengthAdjust="spacingAndGlyphs">Initialize</text>
<rect x="776.500" y="613.500" width="72" height="20" rx="3" fill="#fff" stroke="#2b6b7d"/><text x="812" y="628" class="c">OK</text>
<rect x="857.500" y="613.500" width="72" height="20" rx="3" fill="#fff" stroke="#ccc"/><text x="893" y="628" class="c" textLength="33" lengthAdjust="spacingAndGlyphs">Cancel</text>
</svg>
</body></html>
